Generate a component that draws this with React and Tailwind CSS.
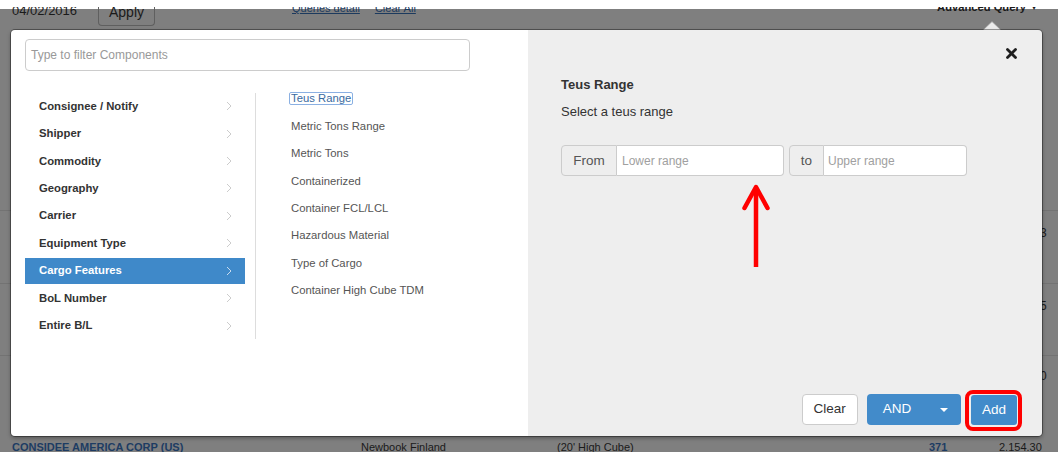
import React from "react";

const leftItems = [
  "Consignee / Notify",
  "Shipper",
  "Commodity",
  "Geography",
  "Carrier",
  "Equipment Type",
  "Cargo Features",
  "BoL Number",
  "Entire B/L",
];

const midItems = [
  "Teus Range",
  "Metric Tons Range",
  "Metric Tons",
  "Containerized",
  "Container FCL/LCL",
  "Hazardous Material",
  "Type of Cargo",
  "Container High Cube TDM",
];

function Chevron({ color }) {
  return (
    <svg width="6" height="10" viewBox="0 0 6 10" className="shrink-0">
      <polyline points="1,1 5,5 1,9" fill="none" stroke={color} strokeWidth="1" />
    </svg>
  );
}

export default function App() {
  return (
    <div className="relative w-[1058px] h-[452px] overflow-hidden bg-[#7f7f7f] font-['Liberation_Sans',Arial,sans-serif]">
      {/* background page (dimmed by backdrop) */}
      <div className="h-[9px] bg-white" />
      <div className="relative -mt-[2px] flex h-[19px] items-start overflow-hidden">
        <div className="-mt-[3px] w-[98px] pl-[12px] text-[13px] leading-[13px] text-[#1a1a1a]">04/02/2016</div>
        <div className="flex h-[19px] w-[57px] items-start justify-center rounded-b-[4px] border-x border-b border-[#5f5f5f] text-[14px] leading-[14px] text-[#1a1a1a]">
          <span className="-mt-[2px]">Apply</span>
        </div>
        <div className="-mt-[4px] ml-[137px] text-[11px] leading-[11px] text-[#1c3a5e] underline">Queries detail</div>
        <div className="-mt-[4px] ml-[15px] text-[11px] leading-[11px] text-[#1c3a5e] underline">Clear All</div>
        <div className="-mt-[5px] ml-auto flex items-start gap-[6px] pr-[22px]">
          <span className="text-[11.2px] font-bold leading-[11px] text-[#1a1a1a]">Advanced Query</span>
          <span className="text-[8px] leading-[11px] text-[#1a1a1a]">▾</span>
        </div>
      </div>
      <div className="h-[184px]" />
      <div className="h-[73px] border-t border-[#737373] pl-[1040px] pt-[13px] text-[12px] text-[#1a1a1a]">3</div>
      <div className="h-[72px] border-t border-[#737373] pl-[1040px] pt-[13px] text-[12px] text-[#1a1a1a]">5</div>
      <div className="h-[82px] border-t border-[#737373] pl-[1040px] pt-[11px] text-[12px] text-[#1a1a1a]">0</div>
      <div className="flex h-[15px] items-start pt-[3px] text-[11px] font-bold leading-[14px]">
        <span className="w-[361px] pl-[12px] text-[#1d3c63]">CONSIDEE AMERICA CORP (US)</span>
        <span className="w-[196px] font-normal text-[#1a1a1a]">Newbook Finland</span>
        <span className="w-[372px] font-normal text-[#1a1a1a]">(20&apos; High Cube)</span>
        <span className="w-[70px] text-[#1d3c63]">371</span>
        <span className="font-normal text-[#1a1a1a]">2.154.30</span>
      </div>

      {/* popover arrow */}
      <svg className="absolute left-[982px] top-[21px]" width="20" height="10" viewBox="0 0 20 10">
        <polygon points="0,10 10,0.5 20,10" fill="#ececec" />
        <polyline points="0,10 10,0.5 20,10" fill="none" stroke="#9a9a9a" strokeWidth="0.8" />
      </svg>

      {/* modal */}
      <div className="absolute left-[11px] top-[30px] flex h-[406px] w-[1031px] overflow-hidden rounded-[4px] shadow-[0_0_0_1px_rgba(0,0,0,0.35),0_2px_4px_rgba(0,0,0,0.35)]">
        {/* left panel */}
        <div className="w-[517px] bg-white pl-[14px] pt-[9px]">
          <div className="flex h-[32px] w-[445px] items-center rounded-[4px] border border-[#cccccc] pl-[5px] text-[12px] text-[#999999]">
            Type to filter Components
          </div>
          <div className="mt-[14.8px] flex items-start">
            <div className="mt-[7.4px] w-[231px] border-r border-[#dddddd] pr-[10px]">
              <ul className="flex w-[220px] flex-col gap-[1.43px]">
                {leftItems.map((it) => {
                  const sel = it === "Cargo Features";
                  return (
                    <li
                      key={it}
                      className={
                        sel
                          ? "flex h-[26px] items-center justify-between bg-[#3f89c9] pl-[14px] pr-[13px] text-[11.3px] font-bold text-white"
                          : "flex h-[26px] items-center justify-between pl-[14px] pr-[13px] text-[11.3px] font-bold text-[#333333]"
                      }
                    >
                      <span>{it}</span>
                      <Chevron color={sel ? "#c9dcef" : "#cccccc"} />
                    </li>
                  );
                })}
              </ul>
            </div>
            <ul className="flex flex-col gap-[1.43px]">
              {midItems.map((it, i) => (
                <li key={it} className="flex h-[26px] items-center pl-[35px] text-[11.3px] text-[#555555]">
                  {i === 0 ? (
                    <span className="-ml-[2px] inline-block rounded-[2px] border border-[#8bb0e2] px-[1px] leading-[11px] text-[#3a6aa0]">
                      {it}
                    </span>
                  ) : (
                    <span>{it}</span>
                  )}
                </li>
              ))}
            </ul>
          </div>
        </div>

        {/* right panel */}
        <div className="relative flex w-[514px] flex-col bg-[#eeeeee]">
          <div className="flex justify-end pr-[25px] pt-[18px]">
            <svg width="11" height="11" viewBox="0 0 11 11">
              <line x1="1.5" y1="1.5" x2="9.5" y2="9.5" stroke="#1e1e1e" strokeWidth="2.8" strokeLinecap="round" />
              <line x1="9.5" y1="1.5" x2="1.5" y2="9.5" stroke="#1e1e1e" strokeWidth="2.8" strokeLinecap="round" />
            </svg>
          </div>
          <div className="mt-[18px] pl-[33px] text-[13px] font-bold leading-[16px] text-[#333333]">Teus Range</div>
          <div className="mt-[11px] pl-[33px] text-[13px] leading-[16px] text-[#333333]">Select a teus range</div>
          <div className="mt-[25.3px] flex pl-[33px]">
            <div className="flex h-[31px] w-[56px] items-center justify-center rounded-l-[4px] border border-[#cccccc] bg-[#eeeeee] text-[13.5px] text-[#555555]">
              From
            </div>
            <div className="flex h-[31px] w-[167px] items-center rounded-r-[4px] border border-l-0 border-[#cccccc] bg-white pl-[5px] text-[12px] text-[#a0a0a0]">
              Lower range
            </div>
            <div className="ml-[5px] flex h-[31px] w-[35px] items-center justify-center rounded-l-[4px] border border-[#cccccc] bg-[#eeeeee] text-[13.5px] text-[#555555]">
              to
            </div>
            <div className="flex h-[31px] w-[143px] items-center rounded-r-[4px] border border-l-0 border-[#cccccc] bg-white pl-[4px] text-[12px] text-[#a0a0a0]">
              Upper range
            </div>
          </div>

          {/* annotation arrow */}
          <svg className="absolute left-[213px] top-[153px]" width="30" height="88" viewBox="0 0 30 88">
            <line x1="15" y1="5" x2="15" y2="84" stroke="#ff0000" strokeWidth="4.5" strokeLinecap="butt" />
            <polyline points="3.5,25 15,4 26.5,25" fill="none" stroke="#ff0000" strokeWidth="4.5" strokeLinecap="round" strokeLinejoin="round" />
          </svg>

          <div className="mt-auto flex items-end justify-end pb-[11px] pr-[25px]">
            <div className="flex h-[31px] w-[56px] items-center justify-center rounded-[4px] border border-[#cccccc] bg-white text-[13.5px] text-[#333333]">
              Clear
            </div>
            <div className="ml-[9.4px] flex h-[31px] w-[94px] items-center rounded-[4px] bg-[#428bca] text-[13.5px] text-white">
              <span className="w-[60px] text-center">AND</span>
              <span className="flex flex-1 justify-center">
                <svg width="8" height="4" viewBox="0 0 8 4">
                  <polygon points="0,0 8,0 4,4" fill="#ffffff" />
                </svg>
              </span>
            </div>
            <div className="relative ml-[10px] flex h-[30px] w-[46px] items-center justify-center rounded-[3px] bg-[#428bca] text-[13.5px] text-white">
              Add
              <div className="absolute -bottom-[6px] -left-[6px] -right-[5px] -top-[5px] rounded-[8px] border-[4px] border-[#ff0000]" />
            </div>
          </div>
        </div>
      </div>
    </div>
  );
}
